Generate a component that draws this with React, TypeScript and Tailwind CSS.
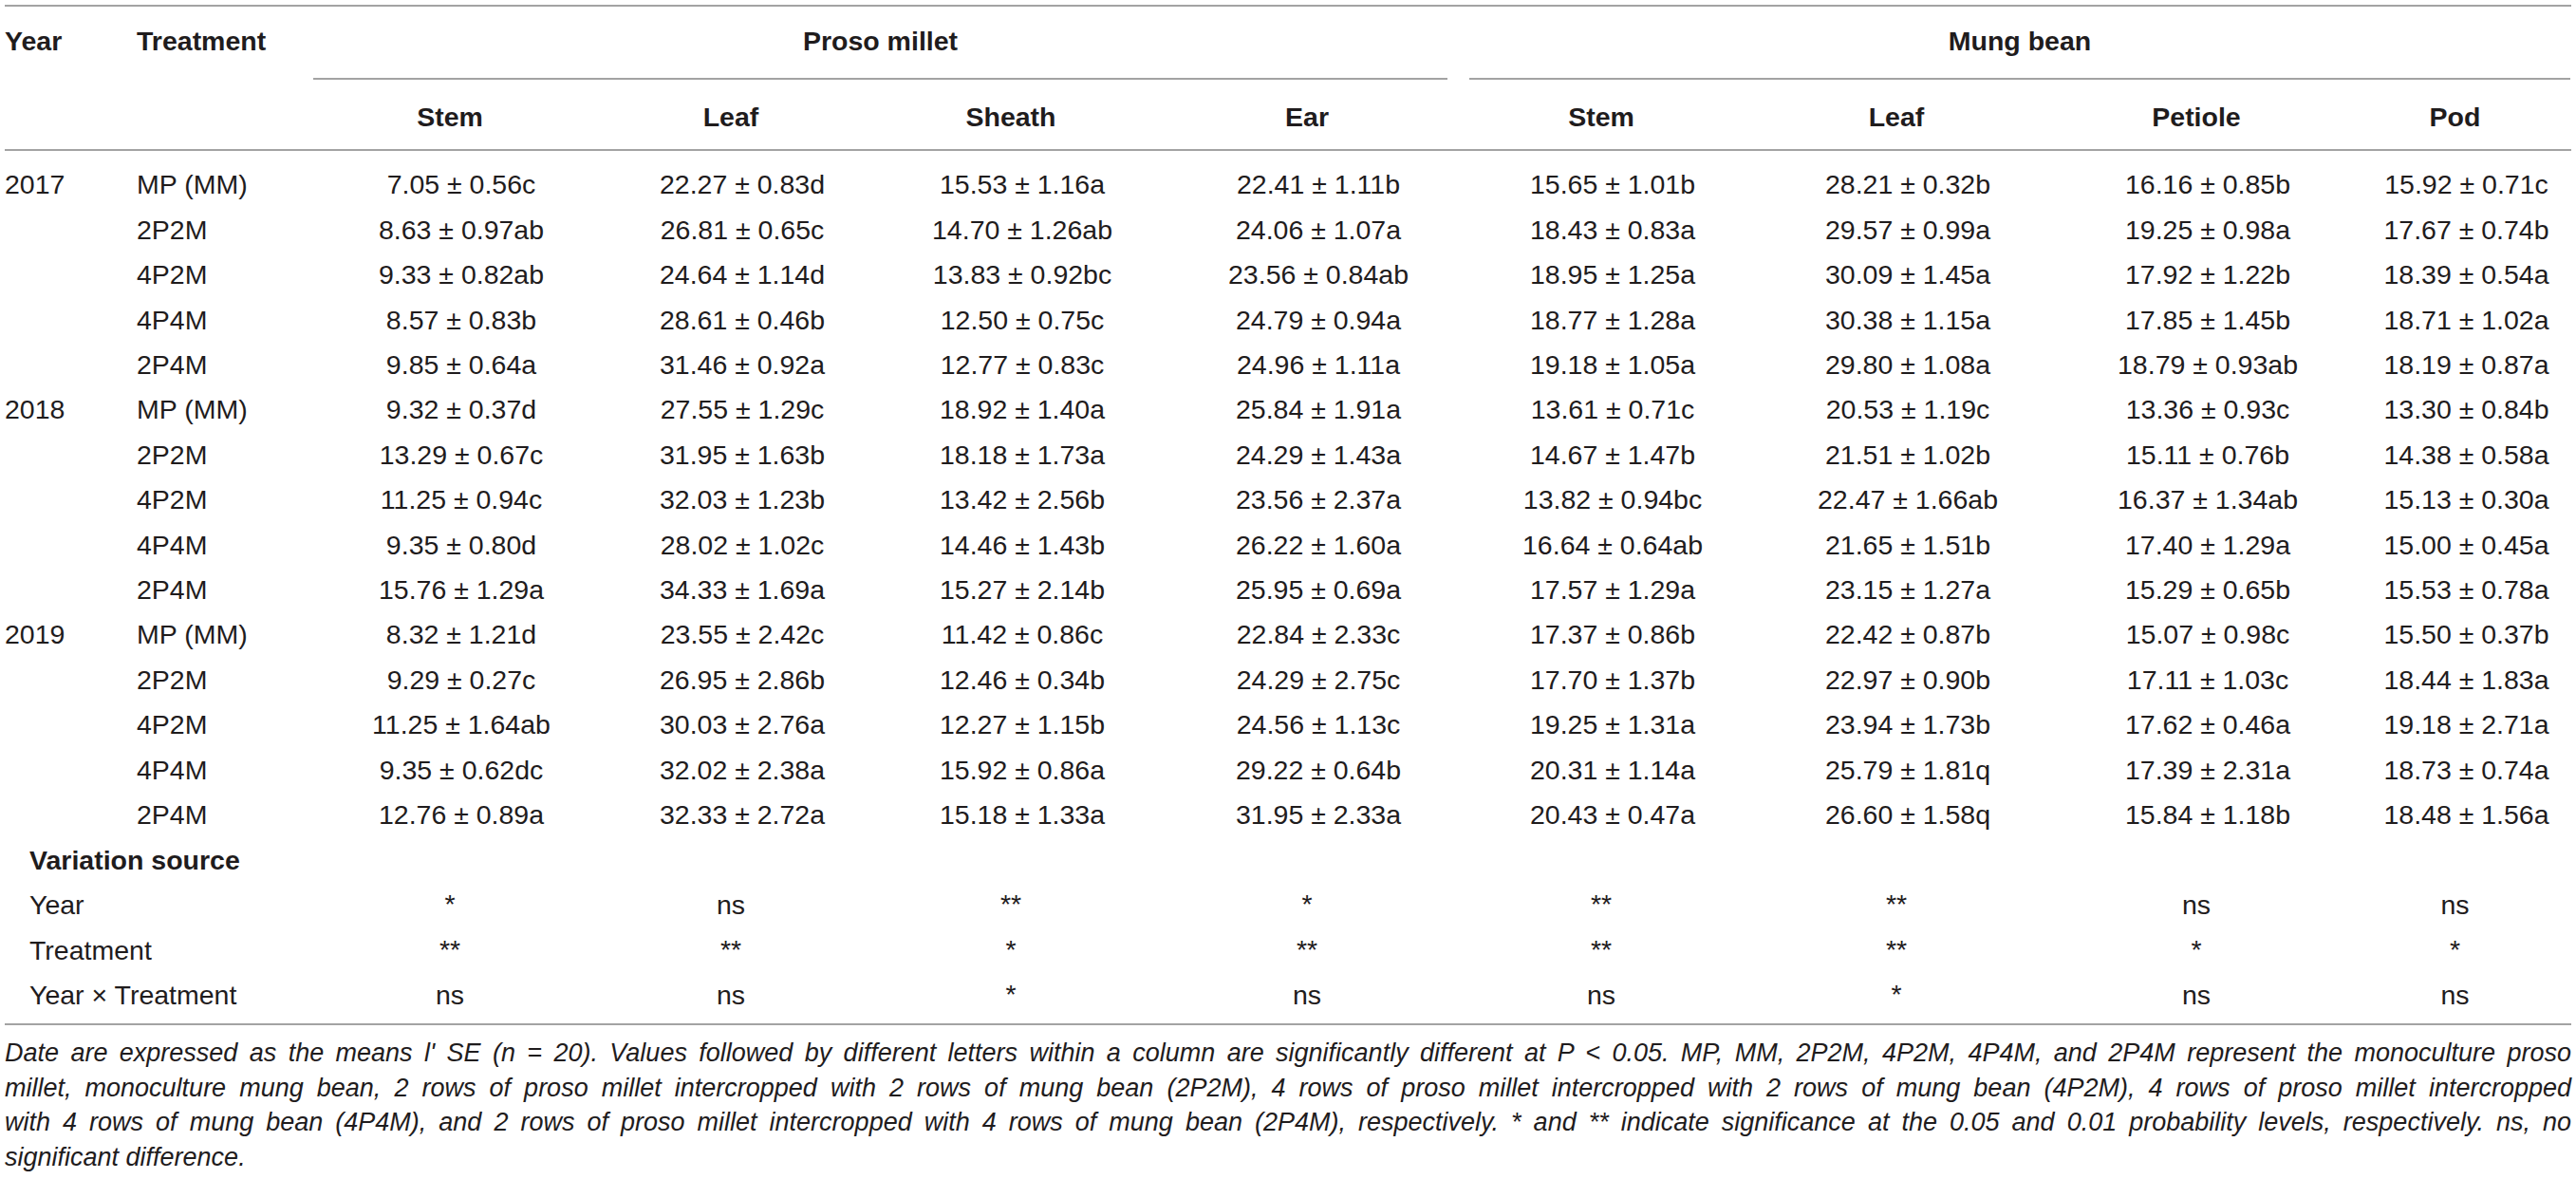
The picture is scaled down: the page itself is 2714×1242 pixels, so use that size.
const COLS =
  "grid grid-cols-[139px_182px_296px_296px_294px_330px_290px_332px_300px_245px]";

const subHeads = ["Stem", "Leaf", "Sheath", "Ear", "Stem", "Leaf", "Petiole", "Pod"];

type Row = { year?: string; treatment: string; values: string[] };

const rows: Row[] = [
  { year: "2017", treatment: "MP (MM)", values: ["7.05 ± 0.56c", "22.27 ± 0.83d", "15.53 ± 1.16a", "22.41 ± 1.11b", "15.65 ± 1.01b", "28.21 ± 0.32b", "16.16 ± 0.85b", "15.92 ± 0.71c"] },
  { treatment: "2P2M", values: ["8.63 ± 0.97ab", "26.81 ± 0.65c", "14.70 ± 1.26ab", "24.06 ± 1.07a", "18.43 ± 0.83a", "29.57 ± 0.99a", "19.25 ± 0.98a", "17.67 ± 0.74b"] },
  { treatment: "4P2M", values: ["9.33 ± 0.82ab", "24.64 ± 1.14d", "13.83 ± 0.92bc", "23.56 ± 0.84ab", "18.95 ± 1.25a", "30.09 ± 1.45a", "17.92 ± 1.22b", "18.39 ± 0.54a"] },
  { treatment: "4P4M", values: ["8.57 ± 0.83b", "28.61 ± 0.46b", "12.50 ± 0.75c", "24.79 ± 0.94a", "18.77 ± 1.28a", "30.38 ± 1.15a", "17.85 ± 1.45b", "18.71 ± 1.02a"] },
  { treatment: "2P4M", values: ["9.85 ± 0.64a", "31.46 ± 0.92a", "12.77 ± 0.83c", "24.96 ± 1.11a", "19.18 ± 1.05a", "29.80 ± 1.08a", "18.79 ± 0.93ab", "18.19 ± 0.87a"] },
  { year: "2018", treatment: "MP (MM)", values: ["9.32 ± 0.37d", "27.55 ± 1.29c", "18.92 ± 1.40a", "25.84 ± 1.91a", "13.61 ± 0.71c", "20.53 ± 1.19c", "13.36 ± 0.93c", "13.30 ± 0.84b"] },
  { treatment: "2P2M", values: ["13.29 ± 0.67c", "31.95 ± 1.63b", "18.18 ± 1.73a", "24.29 ± 1.43a", "14.67 ± 1.47b", "21.51 ± 1.02b", "15.11 ± 0.76b", "14.38 ± 0.58a"] },
  { treatment: "4P2M", values: ["11.25 ± 0.94c", "32.03 ± 1.23b", "13.42 ± 2.56b", "23.56 ± 2.37a", "13.82 ± 0.94bc", "22.47 ± 1.66ab", "16.37 ± 1.34ab", "15.13 ± 0.30a"] },
  { treatment: "4P4M", values: ["9.35 ± 0.80d", "28.02 ± 1.02c", "14.46 ± 1.43b", "26.22 ± 1.60a", "16.64 ± 0.64ab", "21.65 ± 1.51b", "17.40 ± 1.29a", "15.00 ± 0.45a"] },
  { treatment: "2P4M", values: ["15.76 ± 1.29a", "34.33 ± 1.69a", "15.27 ± 2.14b", "25.95 ± 0.69a", "17.57 ± 1.29a", "23.15 ± 1.27a", "15.29 ± 0.65b", "15.53 ± 0.78a"] },
  { year: "2019", treatment: "MP (MM)", values: ["8.32 ± 1.21d", "23.55 ± 2.42c", "11.42 ± 0.86c", "22.84 ± 2.33c", "17.37 ± 0.86b", "22.42 ± 0.87b", "15.07 ± 0.98c", "15.50 ± 0.37b"] },
  { treatment: "2P2M", values: ["9.29 ± 0.27c", "26.95 ± 2.86b", "12.46 ± 0.34b", "24.29 ± 2.75c", "17.70 ± 1.37b", "22.97 ± 0.90b", "17.11 ± 1.03c", "18.44 ± 1.83a"] },
  { treatment: "4P2M", values: ["11.25 ± 1.64ab", "30.03 ± 2.76a", "12.27 ± 1.15b", "24.56 ± 1.13c", "19.25 ± 1.31a", "23.94 ± 1.73b", "17.62 ± 0.46a", "19.18 ± 2.71a"] },
  { treatment: "4P4M", values: ["9.35 ± 0.62dc", "32.02 ± 2.38a", "15.92 ± 0.86a", "29.22 ± 0.64b", "20.31 ± 1.14a", "25.79 ± 1.81q", "17.39 ± 2.31a", "18.73 ± 0.74a"] },
  { treatment: "2P4M", values: ["12.76 ± 0.89a", "32.33 ± 2.72a", "15.18 ± 1.33a", "31.95 ± 2.33a", "20.43 ± 0.47a", "26.60 ± 1.58q", "15.84 ± 1.18b", "18.48 ± 1.56a"] },
];

const variation = [
  { label: "Year", values: ["*", "ns", "**", "*", "**", "**", "ns", "ns"] },
  { label: "Treatment", values: ["**", "**", "*", "**", "**", "**", "*", "*"] },
  { label: "Year × Treatment", values: ["ns", "ns", "*", "ns", "ns", "*", "ns", "ns"] },
];

const caption = [
  "Date are expressed as the means l' SE (n = 20). Values followed by different letters within a column are significantly different at P < 0.05. MP, MM, 2P2M, 4P2M, 4P4M, and 2P4M represent the monoculture proso",
  "millet, monoculture mung bean, 2 rows of proso millet intercropped with 2 rows of mung bean (2P2M), 4 rows of proso millet intercropped with 2 rows of mung bean (4P2M), 4 rows of proso millet intercropped",
  "with 4 rows of mung bean (4P4M), and 2 rows of proso millet intercropped with 4 rows of mung bean (2P4M), respectively. * and ** indicate significance at the 0.05 and 0.01 probability levels, respectively. ns, no",
];

const App = () => {
  return (
    <div className="w-[2714px] bg-white px-[5px] pt-[5px] font-['Liberation_Sans',Arial,sans-serif] text-[#1f1c1d]">
      <div className="w-[2704px]">
        {/* header */}
        <div className="border-t-2 border-b-2 border-[#a3a3a3]">
          <div className={`${COLS} h-[77px] text-[28.5px] font-bold leading-none`}>
            <div className="flex items-center pb-[5px]">Year</div>
            <div className="flex items-center pb-[5px]">Treatment</div>
            <div className="col-span-4 ml-[4px] mr-[17px] flex items-center justify-center border-b-2 border-[#a3a3a3] pb-[3px]">
              Proso millet
            </div>
            <div className="col-span-4 ml-[6px] mr-[1px] flex items-center justify-center border-b-2 border-[#a3a3a3] pb-[3px]">
              Mung bean
            </div>
          </div>
          <div className={`${COLS} h-[73px] text-[28.5px] font-bold leading-none`}>
            <div />
            <div />
            {subHeads.map((h, i) => (
              <div key={i} className="flex items-center justify-center pt-[5px]">
                {h}
              </div>
            ))}
          </div>
        </div>

        {/* body */}
        <div className="border-b-2 border-[#a3a3a3] pt-[12px] pb-[6px] text-[28.5px] leading-none">
          {rows.map((r, i) => (
            <div key={i} className={`${COLS} h-[47.4px]`}>
              <div className="flex items-center">{r.year ?? ""}</div>
              <div className="flex items-center">{r.treatment}</div>
              {r.values.map((v, j) => (
                <div key={j} className="flex items-center justify-center whitespace-nowrap pl-[24px]">
                  {v}
                </div>
              ))}
            </div>
          ))}
          <div className="flex h-[48px] items-center pl-[26px] font-bold">Variation source</div>
          {variation.map((r, i) => (
            <div key={i} className={`${COLS} h-[47.4px]`}>
              <div className="col-span-2 flex items-center pl-[26px]">{r.label}</div>
              {r.values.map((v, j) => (
                <div
                  key={j}
                  className={`flex justify-center ${v === "ns" ? "items-center" : "items-center pb-[2px]"}`}
                >
                  {v}
                </div>
              ))}
            </div>
          ))}
        </div>

        {/* footnote */}
        <div className="pt-[11px] text-[27px] italic leading-[36.7px]">
          {caption.map((line, i) => (
            <div key={i} className="whitespace-nowrap text-justify [text-align-last:justify]">
              {line}
            </div>
          ))}
          <div>significant difference.</div>
        </div>
      </div>
    </div>
  );
};

export default App;
